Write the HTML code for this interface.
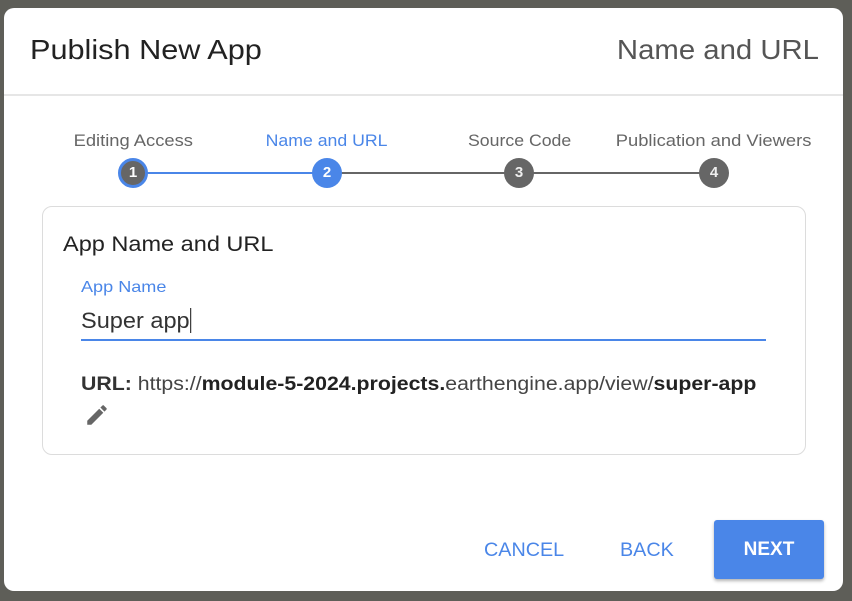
<!DOCTYPE html>
<html><head><meta charset="utf-8"><style>
*{margin:0;padding:0;box-sizing:border-box}
body{width:852px;height:601px;overflow:hidden;background:#5e5e58;font-family:"Liberation Sans",sans-serif;position:relative}
.dlg{position:absolute;left:4px;top:8px;width:839px;height:583px;background:#fff;border-radius:10px}
.abs{position:absolute;white-space:nowrap;transform-origin:0 0}
.t{font-size:28px;color:#222;top:26px;left:26px;transform:scaleX(1.095)}
.tr{font-size:28px;color:#555;top:26px;right:24px;transform-origin:100% 0;transform:scaleX(1.047)}
.hr{position:absolute;left:0;right:0;top:86px;height:2px;background:#e6e6e6}
.lbl{font-size:17px;color:#666;top:123px;transform-origin:50% 0}
.c{position:absolute;width:30px;height:30px;border-radius:50%;background:#666;color:#eee;font-size:15px;font-weight:bold;text-align:center;line-height:30px;top:150px}
.card{position:absolute;left:38px;top:198px;width:764px;height:249px;border:1px solid #dcdcdc;border-radius:10px}
.btn{font-size:19px;color:#4a86e8;top:532px}
</style></head><body>
<div class="dlg">
<div class="abs t">Publish New App</div>
<div class="abs tr">Name and URL</div>
<div class="hr"></div>
<div class="abs lbl" style="left:69px;width:120px;text-align:center"><span style="display:inline-block;transform:scaleX(1.08)">Editing Access</span></div>
<div class="abs lbl" style="left:263px;width:120px;text-align:center;color:#4a86e8"><span style="display:inline-block;transform:scaleX(1.04)">Name and URL</span></div>
<div class="abs lbl" style="left:456px;width:120px;text-align:center"><span style="display:inline-block;transform:scaleX(1.04)">Source Code</span></div>
<div class="abs lbl" style="left:610px;width:200px;text-align:center"><span style="display:inline-block;transform:scaleX(1.08)">Publication and Viewers</span></div>
<div style="position:absolute;left:129px;top:164px;width:194px;height:2px;background:#4a86e8"></div>
<div style="position:absolute;left:323px;top:164px;width:387px;height:2px;background:#666"></div>
<div class="c" style="left:114px;border:3px solid #4a86e8;line-height:24px;color:#fff">1</div>
<div class="c" style="left:308px;background:#4a86e8;color:#fff">2</div>
<div class="c" style="left:500px">3</div>
<div class="c" style="left:695px">4</div>
<div class="card"></div>
<div class="abs" style="left:59px;top:225px;font-size:21px;color:#222;transform:scaleX(1.12)">App Name and URL</div>
<div class="abs" style="left:77px;top:271px;font-size:16px;color:#4a86e8;transform:scaleX(1.13)">App Name</div>
<div class="abs" style="left:77px;top:300px;font-size:22px;color:#333;transform:scaleX(1.07)">Super app<span style="display:inline-block;width:1px;height:25px;background:#222;vertical-align:-5px"></span></div>
<div style="position:absolute;left:77px;top:331px;width:685px;height:2px;background:#4a86e8"></div>
<div class="abs" style="left:77px;top:366px;font-size:19px;color:#444;transform:scaleX(1.12)"><b style="color:#333">URL:</b> https://<b style="color:#222">module-5-2024.projects.</b>earthengine.app/view/<b style="color:#222">super-app</b></div>
<svg class="abs" style="left:80px;top:394px" width="26" height="26" viewBox="0 0 24 24"><path fill="#666" d="M3 17.25V21h3.75L17.81 9.94l-3.75-3.75L3 17.25zM20.71 7.04a1 1 0 0 0 0-1.41l-2.34-2.34a1 1 0 0 0-1.41 0l-1.83 1.83 3.75 3.75 1.83-1.83z"/></svg>
<div class="abs btn" style="left:480px;transform:scaleX(1.04)">CANCEL</div>
<div class="abs btn" style="left:616px;transform:scaleX(1.04)">BACK</div>
<div style="position:absolute;left:710px;top:512px;width:110px;height:59px;background:#4a86e8;border-radius:3px;box-shadow:0 2px 3px rgba(0,0,0,.3);color:#fff;font-size:19px;font-weight:bold;text-align:center;line-height:59px">NEXT</div>
</div>
</body></html>
